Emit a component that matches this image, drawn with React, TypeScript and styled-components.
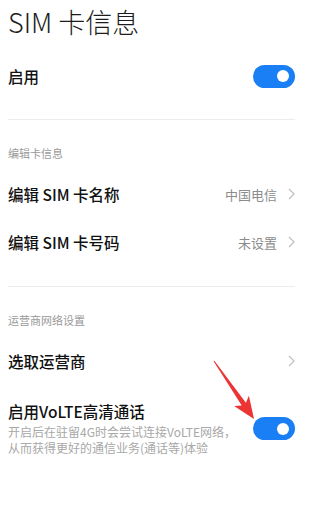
import React from "react";
import styled, { createGlobalStyle } from "styled-components";

const GlobalStyle = createGlobalStyle`
  html, body {
    margin: 0;
    padding: 0;
    background: #ffffff;
  }
  body {
    font-family: "Noto Sans CJK SC", "Noto Sans", sans-serif;
    -webkit-font-smoothing: antialiased;
  }
`;

const Page = styled.div`
  position: relative;
  width: 316px;
  height: 515px;
  overflow: hidden;
  background: #fff;
  padding: 0 21px 0 8px;
  box-sizing: border-box;
`;

const Title = styled.h1`
  margin: 0;
  height: 50px;
  padding-top: 2px;
  box-sizing: border-box;
  font-size: 27px;
  line-height: 40px;
  font-weight: 300;
  color: #1c1c1c;
`;

const Row = styled.div<{ $height?: number }>`
  display: flex;
  align-items: center;
  justify-content: space-between;
  height: ${(p) => p.$height ?? 48}px;
`;

const Label = styled.span`
  font-size: 15.5px;
  font-weight: 500;
  color: #111;
`;

const Divider = styled.div<{ $top: number }>`
  height: 1px;
  background: #ececec;
  margin-top: ${(p) => p.$top}px;
`;

const SectionHeader = styled.div`
  padding: 25px 0 9px;
  font-size: 11px;
  line-height: 16px;
  color: #9a9a9a;
`;

const Value = styled.div`
  display: flex;
  align-items: center;
  gap: 11px;
  font-size: 13px;
  color: #8c8c8c;
`;

const Toggle = styled.div<{ $on: boolean }>`
  position: relative;
  flex: none;
  width: 42px;
  height: 23px;
  border-radius: 12px;
  background: ${(p) => (p.$on ? "#1a7ff4" : "#d8d8d8")};
  &::after {
    content: "";
    position: absolute;
    top: 5.5px;
    ${(p) => (p.$on ? "right: 6px;" : "left: 6px;")}
    width: 12px;
    height: 12px;
    border-radius: 50%;
    background: #fff;
  }
`;

const DetailRow = styled.div`
  display: flex;
  align-items: center;
  justify-content: space-between;
  padding-top: 16px;
`;

const DetailText = styled.div`
  display: flex;
  flex-direction: column;
`;

const DetailTitle = styled.span`
  font-size: 15.5px;
  font-weight: 500;
  line-height: 20px;
  color: #111;
`;

const DetailSub = styled.span`
  margin-top: 3px;
  font-size: 12px;
  line-height: 16px;
  color: #a8a8a8;
`;

const Overlay = styled.svg`
  position: absolute;
  left: 0;
  top: 0;
  pointer-events: none;
`;

const Chevron = () => (
  <svg width="7" height="12" viewBox="0 0 7 12">
    <path d="M1 1 L6 6 L1 11" fill="none" stroke="#bdbdbd" strokeWidth="1.1" />
  </svg>
);

export default function App() {
  return (
    <>
      <GlobalStyle />
      <Page>
        <Title>SIM 卡信息</Title>
        <Row $height={52}>
          <Label>启用</Label>
          <Toggle $on />
        </Row>
        <Divider $top={17} />

        <SectionHeader>编辑卡信息</SectionHeader>
        <Row>
          <Label>编辑 SIM 卡名称</Label>
          <Value>
            中国电信
            <Chevron />
          </Value>
        </Row>
        <Row>
          <Label>编辑 SIM 卡号码</Label>
          <Value>
            未设置
            <Chevron />
          </Value>
        </Row>
        <Divider $top={20} />

        <SectionHeader>运营商网络设置</SectionHeader>
        <Row>
          <Label>选取运营商</Label>
          <Value>
            <Chevron />
          </Value>
        </Row>
        <DetailRow>
          <DetailText>
            <DetailTitle>启用VoLTE高清通话</DetailTitle>
            <DetailSub>
              开启后在驻留4G时会尝试连接VoLTE网络，
              <br />
              从而获得更好的通信业务(通话等)体验
            </DetailSub>
          </DetailText>
          <Toggle $on />
        </DetailRow>

        <Overlay width="316" height="515" viewBox="0 0 316 515">
          <polygon
            points="213.6,361.3 241.7,405.6 234.1,406 254,419 248.9,395.8 245.9,402.8 214.4,360.7"
            fill="#ec3434"
          />
        </Overlay>
      </Page>
    </>
  );
}
